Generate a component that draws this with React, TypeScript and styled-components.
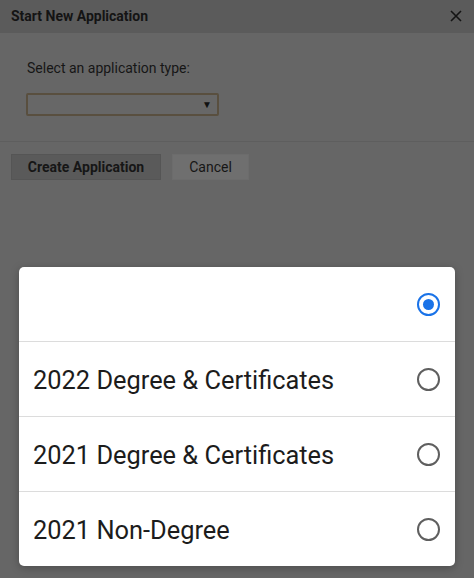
import React from "react";
import styled, { createGlobalStyle } from "styled-components";

const Global = createGlobalStyle`
  html, body { margin: 0; padding: 0; }
  body { font-family: Roboto, "Noto Sans", sans-serif; background: #666666; }
  * { box-sizing: border-box; }
`;

const Page = styled.div`
  position: relative;
  width: 474px;
  height: 578px;
  background: #666666;
  overflow: hidden;
`;

const Header = styled.div`
  height: 33px;
  background: #5b5b5b;
  display: flex;
  align-items: center;
  justify-content: space-between;
  padding: 0 12px 2px 11px;
`;

const Title = styled.div`
  font-size: 14px;
  font-weight: 700;
  color: #141414;
`;

const Close = styled.div`
  width: 12px;
  height: 12px;
  display: flex;
  color: #141414;
`;

const Body = styled.div`
  height: 109px;
  padding: 27px 27px 0 26px;
  border-bottom: 1px solid #5e5e5e;
  display: flex;
  flex-direction: column;
`;

const Label = styled.div`
  font-size: 14px;
  color: #161616;
  height: 16px;
  line-height: 16px;
  margin-left: 1px;
`;

const Select = styled.div`
  margin-top: 17px;
  width: 193px;
  height: 23px;
  border: 2px solid #594f3f;
  border-radius: 2px;
  background: #676767;
  display: flex;
  align-items: center;
  justify-content: flex-end;
  padding-right: 5px;
  font-size: 10px;
  color: #111;
`;

const Footer = styled.div`
  display: flex;
  gap: 11px;
  padding: 12px 11px;
`;

const Button = styled.div<{ $primary?: boolean }>`
  height: 26px;
  display: flex;
  align-items: center;
  justify-content: center;
  white-space: nowrap;
  font-size: 14px;
  color: #161616;
  font-weight: ${(p) => (p.$primary ? 700 : 400)};
  background: ${(p) => (p.$primary ? "#5a5a5a" : "#6f6f6f")};
  border: 1px solid ${(p) => (p.$primary ? "#555555" : "#6c6c6c")};
  width: ${(p) => (p.$primary ? "150px" : "77px")};
`;

const Sheet = styled.div`
  position: absolute;
  left: 19px;
  top: 267px;
  width: 436px;
  background: #ffffff;
  border-radius: 5px;
  box-shadow: 0 2px 8px rgba(0, 0, 0, 0.25);
  display: flex;
  flex-direction: column;
  overflow: hidden;
`;

const Row = styled.div<{ $last?: boolean }>`
  height: ${(p) => (p.$last ? "74px" : "75px")};
  display: flex;
  align-items: center;
  justify-content: space-between;
  padding: 0 15px 0 14px;
  border-bottom: ${(p) => (p.$last ? "none" : "1px solid #dcdcdc")};
`;

const RowText = styled.div`
  font-size: 25.4px;
  color: #1c1c1c;
  padding-top: 2px;
`;

const Radio = styled.div<{ $checked?: boolean }>`
  width: 23px;
  height: 23px;
  border-radius: 50%;
  border: 2px solid ${(p) => (p.$checked ? "#1a73e8" : "#5f5f5f")};
  display: flex;
  align-items: center;
  justify-content: center;
  flex-shrink: 0;
  &::after {
    content: "";
    display: ${(p) => (p.$checked ? "block" : "none")};
    width: 11px;
    height: 11px;
    border-radius: 50%;
    background: #1a73e8;
  }
`;

const options = [
  { label: "", checked: true },
  { label: "2022 Degree & Certificates", checked: false },
  { label: "2021 Degree & Certificates", checked: false },
  { label: "2021 Non-Degree", checked: false },
];

export default function App() {
  return (
    <Page>
      <Global />
      <Header>
        <Title>Start New Application</Title>
        <Close>
          <svg width="12" height="12" viewBox="0 0 12 12">
            <path d="M1 1L11 11M11 1L1 11" stroke="#141414" strokeWidth="1.6" />
          </svg>
        </Close>
      </Header>
      <Body>
        <Label>Select an application type:</Label>
        <Select>▼</Select>
      </Body>
      <Footer>
        <Button $primary>Create Application</Button>
        <Button>Cancel</Button>
      </Footer>
      <Sheet>
        {options.map((o, i) => (
          <Row key={i} $last={i === options.length - 1}>
            <RowText>{o.label}</RowText>
            <Radio $checked={o.checked} />
          </Row>
        ))}
      </Sheet>
    </Page>
  );
}
